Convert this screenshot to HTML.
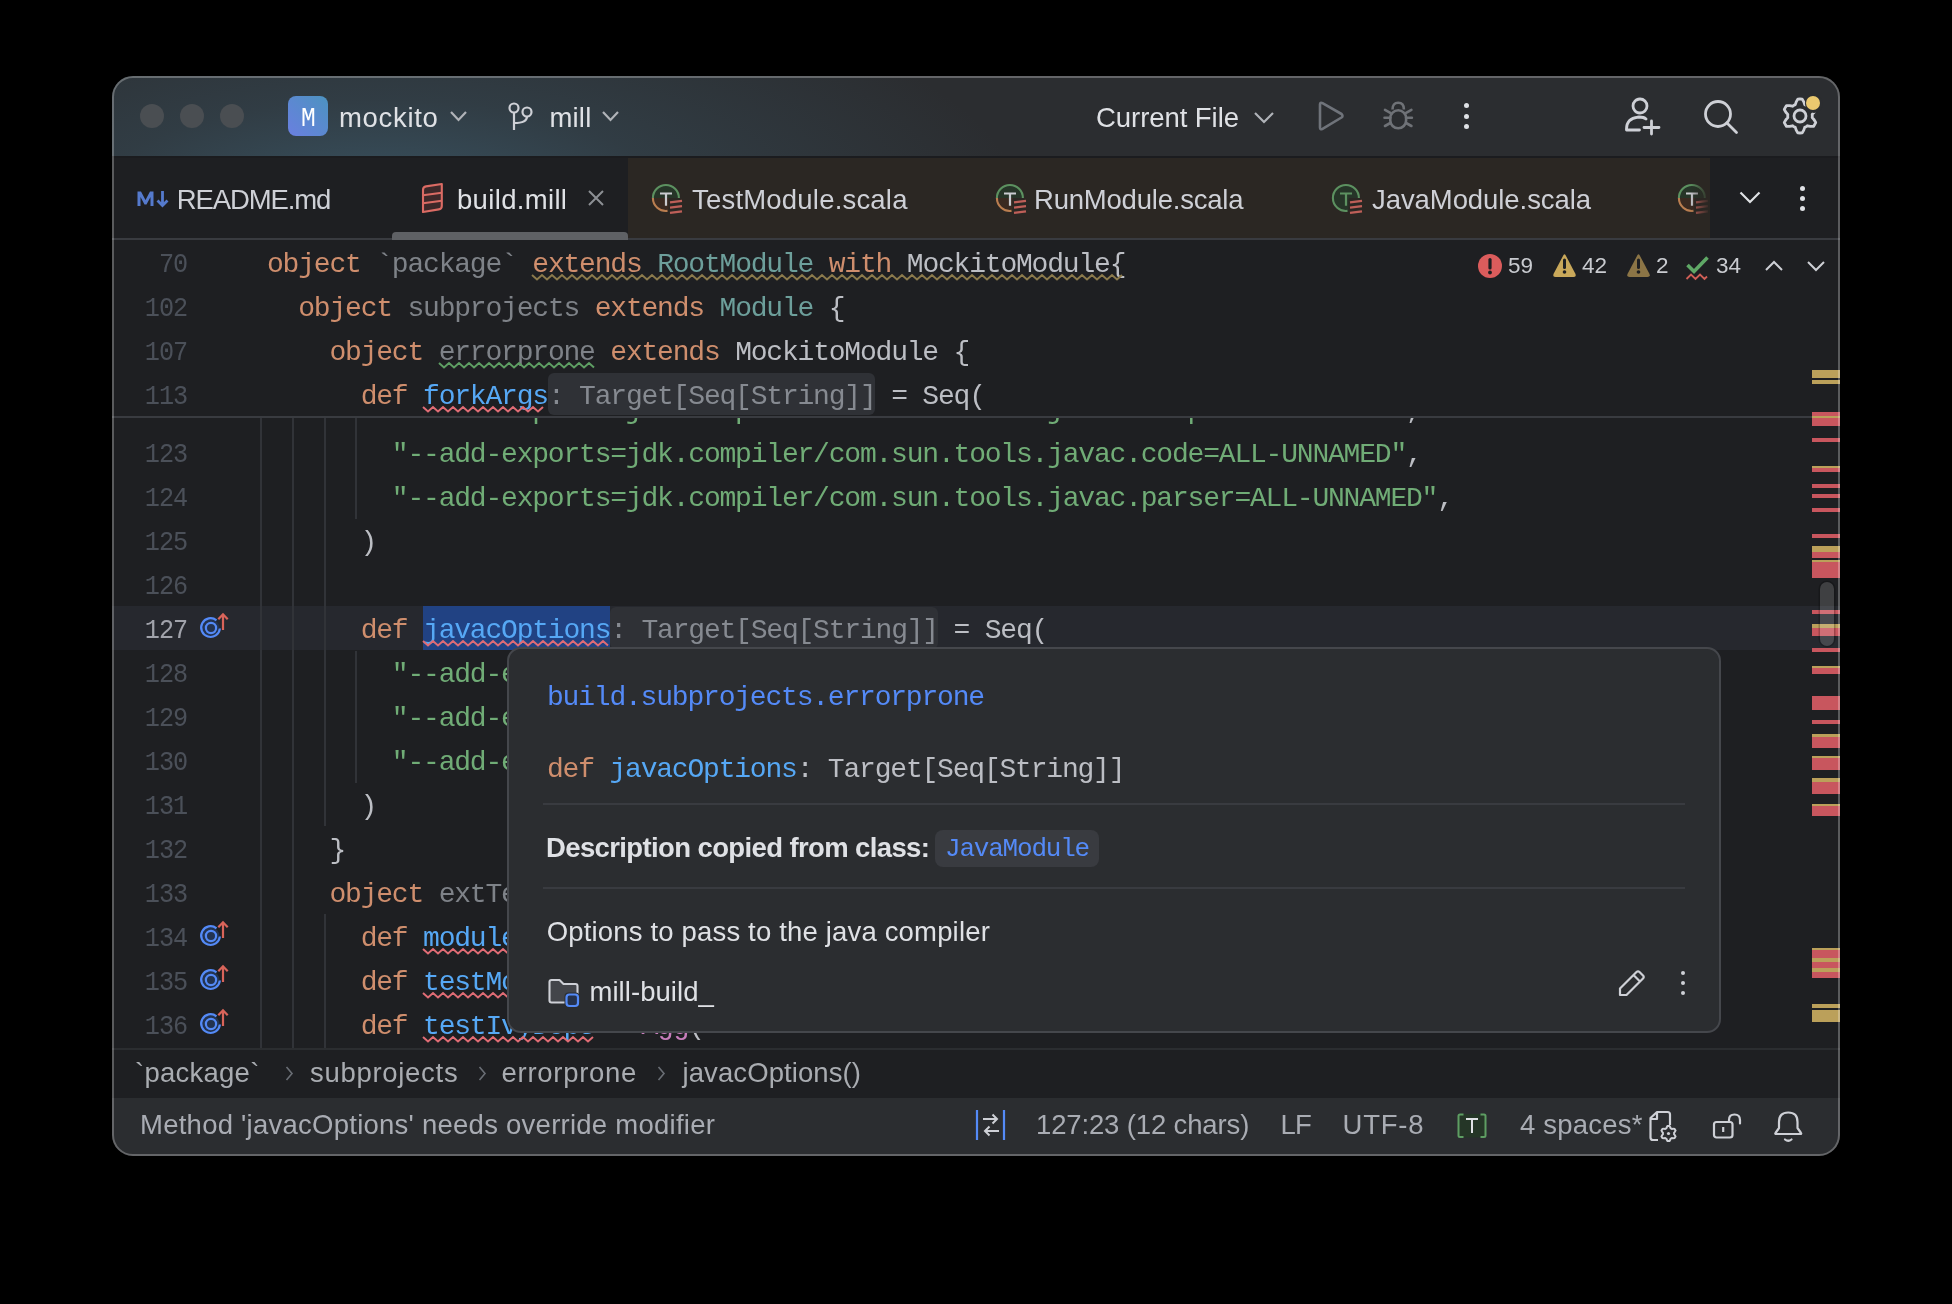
<!DOCTYPE html>
<html><head><meta charset="utf-8"><style>
*{margin:0;padding:0;box-sizing:border-box}
html,body{width:1952px;height:1304px;background:#000;overflow:hidden}
body{position:relative;font-family:"Liberation Sans",sans-serif;}
#win{will-change:transform;position:absolute;left:0;top:0;width:1952px;height:1304px;clip-path:inset(76px 112px 148px 112px round 21px);background:#1E1F22}
#frame{position:absolute;left:112px;top:76px;width:1728px;height:1080px;border-radius:21px;border:2px solid rgba(255,255,255,0.27);pointer-events:none}
.a{position:absolute}
svg{position:absolute;overflow:visible}
.t{position:absolute;white-space:pre;line-height:1}
.m{font-family:"Liberation Mono",monospace;font-size:28px;letter-spacing:-1.2px;white-space:pre}
.ui{font-size:26px;color:#DFE1E5}
.cl{position:absolute;left:0;height:44px;line-height:44px;white-space:pre;font-family:"Liberation Mono",monospace;font-size:28px;letter-spacing:-1.2px;padding-top:2px}
.ln{position:absolute;width:100px;text-align:right;transform:scaleX(0.9);transform-origin:100% 50%;height:44px;line-height:44px;white-space:pre;font-family:"Liberation Mono",monospace;font-size:28px;letter-spacing:-1.2px;color:#4B5059;padding-top:2px}
</style></head><body>
<div id="win">
<div class="a" style="left:0;top:76px;width:1952px;height:80px;background:#2B2D30"></div>
<div class="a" style="left:0;top:76px;width:1952px;height:80px;background:radial-gradient(ellipse 640px 230px at 380px 126px, rgba(66,106,128,0.62), rgba(66,106,128,0.25) 45%, rgba(66,106,128,0) 100%)"></div>
<div class="a" style="left:140px;top:104px;width:24px;height:24px;border-radius:50%;background:#4A4E52"></div>
<div class="a" style="left:180px;top:104px;width:24px;height:24px;border-radius:50%;background:#4A4E52"></div>
<div class="a" style="left:220px;top:104px;width:24px;height:24px;border-radius:50%;background:#4A4E52"></div>
<div class="a" style="left:288px;top:96px;width:40px;height:40px;border-radius:8px;background:linear-gradient(45deg,#6A7FE0,#4C93C0)"></div>
<div class="t" style="left:299.5px;top:104.5px;font-family:'Liberation Mono';font-size:28.5px;color:#fff;transform:scaleX(0.86);transform-origin:8px 0">M</div>
<div class="t" style="left:339.0px;top:104.1px;font-size:27.5px;letter-spacing:0.67px;color:#DFE1E5">mockito</div>
<svg style="left:450px;top:111px" width="17" height="11"><polyline points="1,1 8.5,9 16,1" fill="none" stroke="#B0B3B8" stroke-width="2.2"/></svg>
<svg style="left:506px;top:100px" width="30" height="34"><circle cx="8" cy="8" r="4.5" fill="none" stroke="#CED0D6" stroke-width="2.2"/><circle cx="21" cy="12" r="4.5" fill="none" stroke="#CED0D6" stroke-width="2.2"/><path d="M8 12.5 V30 M8 23 Q21 23 21 16.5" fill="none" stroke="#CED0D6" stroke-width="2.2"/></svg>
<div class="t" style="left:549.5px;top:104.1px;font-size:27.5px;letter-spacing:0.17px;color:#DFE1E5">mill</div>
<svg style="left:602px;top:111px" width="17" height="11"><polyline points="1,1 8.5,9 16,1" fill="none" stroke="#B0B3B8" stroke-width="2.2"/></svg>
<div class="t" style="left:1096.0px;top:104.1px;font-size:27.5px;letter-spacing:-0.06px;color:#DFE1E5">Current File</div>
<svg style="left:1254px;top:112px" width="21" height="12"><polyline points="1,1 10,10 19,1" fill="none" stroke="#B0B3B8" stroke-width="2.2"/></svg>
<svg style="left:1316px;top:100px" width="30" height="32"><path d="M4 4.5 Q4 2 6.5 3.2 L25.5 14 Q27.5 16 25.5 17.5 L6.5 28.8 Q4 30 4 27.5 Z" fill="none" stroke="#6F737A" stroke-width="2.6" stroke-linejoin="round"/></svg>
<svg style="left:1380px;top:100px" width="36" height="32"><path d="M12.5 9.5 Q12.5 2.8 18.2 2.8 Q23.9 2.8 23.9 9.5" fill="none" stroke="#6F7277" stroke-width="2.6"/><rect x="10.3" y="10.3" width="15.8" height="18" rx="7.9" fill="none" stroke="#6F7277" stroke-width="2.6"/><path d="M5 9.8 L10.3 12.8 M4.5 17.8 H10.3 M5 26 L10.3 23 M31.4 9.8 L26.1 12.8 M31.9 17.8 H26.1 M31.4 26 L26.1 23" fill="none" stroke="#6F7277" stroke-width="2.6" stroke-linecap="round"/></svg>
<div class="a" style="left:1463.5px;top:102.5px;width:5px;height:5px;border-radius:50%;background:#DFE1E5"></div>
<div class="a" style="left:1463.5px;top:113.5px;width:5px;height:5px;border-radius:50%;background:#DFE1E5"></div>
<div class="a" style="left:1463.5px;top:124.0px;width:5px;height:5px;border-radius:50%;background:#DFE1E5"></div>
<svg style="left:1620px;top:94px" width="46" height="46"><circle cx="20" cy="12" r="7" fill="none" stroke="#CED0D6" stroke-width="2.8"/><path d="M6.5 36 H19.5 M6.5 36 Q6 24 19 23 Q24 23 26 25" fill="none" stroke="#CED0D6" stroke-width="2.8" stroke-linecap="round"/><path d="M31.5 27 V40 M24 33.5 H39" fill="none" stroke="#CED0D6" stroke-width="2.8" stroke-linecap="round"/></svg>
<svg style="left:1700px;top:96px" width="44" height="42"><circle cx="18" cy="18" r="12.5" fill="none" stroke="#CED0D6" stroke-width="2.8"/><path d="M27 27 L36.5 36.5" fill="none" stroke="#CED0D6" stroke-width="2.8" stroke-linecap="round"/></svg>
<svg style="left:1780px;top:96px" width="40" height="40"><polygon points="20.00,3.00 22.22,3.15 23.78,5.90 24.71,8.64 26.15,9.35 27.49,10.24 30.32,9.68 33.49,9.65 34.72,11.50 35.71,13.49 34.10,16.22 32.19,18.39 32.30,20.00 32.19,21.61 34.10,23.78 35.71,26.51 34.72,28.50 33.49,30.35 30.32,30.32 27.49,29.76 26.15,30.65 24.71,31.36 23.78,34.10 22.22,36.85 20.00,37.00 17.78,36.85 16.22,34.10 15.29,31.36 13.85,30.65 12.51,29.76 9.68,30.32 6.51,30.35 5.28,28.50 4.29,26.51 5.90,23.78 7.81,21.61 7.70,20.00 7.81,18.39 5.90,16.22 4.29,13.49 5.28,11.50 6.51,9.65 9.68,9.68 12.51,10.24 13.85,9.35 15.29,8.64 16.22,5.90 17.78,3.15" fill="none" stroke="#CED0D6" stroke-width="2.8" stroke-linejoin="round"/><circle cx="20" cy="20" r="6" fill="none" stroke="#CED0D6" stroke-width="2.8"/></svg>
<div class="a" style="left:1805px;top:95px;width:18px;height:18px;border-radius:50%;background:#2B2D30"></div>
<div class="a" style="left:1806px;top:96px;width:14px;height:14px;border-radius:50%;background:#EBC96F"></div>
<div class="a" style="left:0;top:156px;width:1952px;height:2px;background:#1B1C1F"></div>
<div class="a" style="left:0;top:158px;width:1952px;height:80px;background:#1E1F22"></div>
<div class="a" style="left:628px;top:158px;width:1082px;height:80px;background:#2B2723"></div>
<div class="a" style="left:0;top:238px;width:1952px;height:2px;background:#393B40"></div>
<div class="a" style="left:392px;top:232px;width:236px;height:8px;border-radius:4px 4px 0 0;background:#5F6165"></div>
<svg style="left:130px;top:175px" width="50" height="40"><path d="M7.5 31 V16.5 H11 L15.5 25 L20 16.5 H23.5 V31 H20.5 V22 L16.5 29.5 H14.5 L10.5 22 V31 Z" fill="#557ACD"/><path d="M32.5 16 V30 M27.5 25.5 L32.5 30.5 L37.5 25.5" fill="none" stroke="#557ACD" stroke-width="2.8"/></svg>
<div class="t" style="left:176.7px;top:185.9px;font-size:27.5px;letter-spacing:-1.11px;color:#CED0D6">README.md</div>
<svg style="left:410px;top:175px" width="50" height="50"><path d="M13 15 Q13 11.8 16 11.4 L31.8 9 L31.8 31 Q31.8 34 28.8 34.4 L13 37 Z" fill="#3D2829" stroke="#DB6B64" stroke-width="2.1" stroke-linejoin="round"/><path d="M13 20.3 L31.8 17.7 M13 28.3 L31.8 25.7" stroke="#DB6B64" stroke-width="2.1"/></svg>
<div class="t" style="left:457.0px;top:185.9px;font-size:27.5px;letter-spacing:0.33px;color:#DFE1E5">build.mill</div>
<svg style="left:588px;top:190px" width="16" height="16"><path d="M1 1 L15 15 M15 1 L1 15" stroke="#8C8F94" stroke-width="2"/></svg>
<svg style="left:651px;top:183px;opacity:1.00" width="34" height="34"><path d="M1.9 15 A13 13 0 0 1 27.9 15 Z" fill="#263528"/><path d="M1.9 15 A13 13 0 0 0 18 27.7 L18 15 Z" fill="#3A2A21"/><path d="M1.9 15 A13 13 0 0 1 27.9 15" fill="none" stroke="#5C9160" stroke-width="2.1"/><path d="M1.9 15 A13 13 0 0 0 16.5 27.9" fill="none" stroke="#BA7E50" stroke-width="2.1"/><path d="M9 10.5 H21 M15 10.5 V22.7" stroke="#C9CBD0" stroke-width="2.2"/><path d="M17.5 16 H33 V32 H17.5 Z" fill="#2B2723"/><path d="M19 19.3 L31 17.8 M19 24.6 L31 23.1 M19 29.9 L31 28.4" stroke="#BF5F58" stroke-width="2.3"/></svg>
<div class="t" style="left:692.0px;top:185.9px;font-size:27.5px;letter-spacing:0.20px;color:#CED0D6">TestModule.scala</div>
<svg style="left:995px;top:183px;opacity:1.00" width="34" height="34"><path d="M1.9 15 A13 13 0 0 1 27.9 15 Z" fill="#263528"/><path d="M1.9 15 A13 13 0 0 0 18 27.7 L18 15 Z" fill="#3A2A21"/><path d="M1.9 15 A13 13 0 0 1 27.9 15" fill="none" stroke="#5C9160" stroke-width="2.1"/><path d="M1.9 15 A13 13 0 0 0 16.5 27.9" fill="none" stroke="#BA7E50" stroke-width="2.1"/><path d="M9 10.5 H21 M15 10.5 V22.7" stroke="#C9CBD0" stroke-width="2.2"/><path d="M17.5 16 H33 V32 H17.5 Z" fill="#2B2723"/><path d="M19 19.3 L31 17.8 M19 24.6 L31 23.1 M19 29.9 L31 28.4" stroke="#BF5F58" stroke-width="2.3"/></svg>
<div class="t" style="left:1034.0px;top:185.9px;font-size:27.5px;letter-spacing:-0.21px;color:#CED0D6">RunModule.scala</div>
<svg style="left:1331px;top:183px;opacity:1.00" width="34" height="34"><path d="M1.9 15 A13 13 0 0 1 27.9 15 Z" fill="#263528"/><path d="M1.9 15 A13 13 0 0 0 18 27.7 L18 15 Z" fill="#263528"/><path d="M1.9 15 A13 13 0 0 1 27.9 15" fill="none" stroke="#5C9160" stroke-width="2.1"/><path d="M1.9 15 A13 13 0 0 0 16.5 27.9" fill="none" stroke="#5C9160" stroke-width="2.1"/><path d="M9 10.5 H21 M15 10.5 V22.7" stroke="#5C9160" stroke-width="2.2"/><path d="M17.5 16 H33 V32 H17.5 Z" fill="#2B2723"/><path d="M19 19.3 L31 17.8 M19 24.6 L31 23.1 M19 29.9 L31 28.4" stroke="#BF5F58" stroke-width="2.3"/></svg>
<div class="t" style="left:1372.0px;top:185.9px;font-size:27.5px;letter-spacing:-0.07px;color:#CED0D6">JavaModule.scala</div>
<svg style="left:1677px;top:183px;opacity:1.00" width="34" height="34"><path d="M1.9 15 A13 13 0 0 1 27.9 15 Z" fill="#263528"/><path d="M1.9 15 A13 13 0 0 0 18 27.7 L18 15 Z" fill="#3A2A21"/><path d="M1.9 15 A13 13 0 0 1 27.9 15" fill="none" stroke="#5C9160" stroke-width="2.1"/><path d="M1.9 15 A13 13 0 0 0 16.5 27.9" fill="none" stroke="#BA7E50" stroke-width="2.1"/><path d="M9 10.5 H21 M15 10.5 V22.7" stroke="#C9CBD0" stroke-width="2.2"/><path d="M17.5 16 H33 V32 H17.5 Z" fill="#2B2723"/><path d="M19 19.3 L31 17.8 M19 24.6 L31 23.1 M19 29.9 L31 28.4" stroke="#BF5F58" stroke-width="2.3"/></svg>
<div class="a" style="left:1690px;top:175px;width:20px;height:50px;background:linear-gradient(90deg,rgba(43,39,35,0),#2B2723)"></div>
<svg style="left:1739px;top:191px" width="22" height="14"><polyline points="1.5,1.5 11,11 20.5,1.5" fill="none" stroke="#DFE1E5" stroke-width="2.2"/></svg>
<div class="a" style="left:1799.5px;top:185.5px;width:5px;height:5px;border-radius:50%;background:#DFE1E5"></div>
<div class="a" style="left:1799.5px;top:195.5px;width:5px;height:5px;border-radius:50%;background:#DFE1E5"></div>
<div class="a" style="left:1799.5px;top:205.5px;width:5px;height:5px;border-radius:50%;background:#DFE1E5"></div>
<div class="a" style="left:0;top:606px;width:1952px;height:44px;background:#26282E"></div>
<div class="a" style="left:260.0px;top:418px;width:2px;height:630px;background:#313338"></div>
<div class="a" style="left:292.0px;top:418px;width:2px;height:630px;background:#313338"></div>
<div class="a" style="left:324.0px;top:418px;width:2px;height:408px;background:#313338"></div>
<div class="a" style="left:324.0px;top:914px;width:2px;height:134px;background:#313338"></div>
<div class="a" style="left:354.5px;top:418px;width:2px;height:101px;background:#313338"></div>
<div class="a" style="left:354.5px;top:651px;width:2px;height:132px;background:#313338"></div>
<div class="a" style="left:423.0px;top:606px;width:187.2px;height:44px;background:#214283"></div>
<div class="a" style="left:610.2px;top:607px;width:327.6px;height:42px;border-radius:6px;background:#2F3136"></div>
<div class="cl" style="top:387px;left:267.0px"><span style="color:#BCBEC4">        </span><span style="color:#70AC76">"--add-exports=jdk.compiler/com.sun.tools.javac.comp=ALL-UNNAMED"</span><span style="color:#BCBEC4">,</span></div>
<div class="ln" style="top:431px;left:86.7px;color:#4B5059">123</div>
<div class="cl" style="top:431px;left:267.0px"><span style="color:#BCBEC4">        </span><span style="color:#70AC76">"--add-exports=jdk.compiler/com.sun.tools.javac.code=ALL-UNNAMED"</span><span style="color:#BCBEC4">,</span></div>
<div class="ln" style="top:475px;left:86.7px;color:#4B5059">124</div>
<div class="cl" style="top:475px;left:267.0px"><span style="color:#BCBEC4">        </span><span style="color:#70AC76">"--add-exports=jdk.compiler/com.sun.tools.javac.parser=ALL-UNNAMED"</span><span style="color:#BCBEC4">,</span></div>
<div class="ln" style="top:519px;left:86.7px;color:#4B5059">125</div>
<div class="cl" style="top:519px;left:267.0px"><span style="color:#BCBEC4">      )</span></div>
<div class="ln" style="top:563px;left:86.7px;color:#4B5059">126</div>
<div class="cl" style="top:563px;left:267.0px"><span style="color:#BCBEC4"></span></div>
<div class="ln" style="top:607px;left:86.7px;color:#A1A3AB">127</div>
<div class="cl" style="top:607px;left:267.0px"><span style="color:#BCBEC4">      </span><span style="color:#CF8E6D">def</span><span style="color:#BCBEC4"> </span><span style="color:#56A8F5">javacOptions</span><span style="color:#868A91">: Target[Seq[String]]</span><span style="color:#BCBEC4"> = Seq(</span></div>
<div class="ln" style="top:651px;left:86.7px;color:#4B5059">128</div>
<div class="cl" style="top:651px;left:267.0px"><span style="color:#BCBEC4">        </span><span style="color:#70AC76">"--add-exports=jdk.compiler/com.sun.tools.javac.file=ALL-UNNAMED"</span><span style="color:#BCBEC4">,</span></div>
<div class="ln" style="top:695px;left:86.7px;color:#4B5059">129</div>
<div class="cl" style="top:695px;left:267.0px"><span style="color:#BCBEC4">        </span><span style="color:#70AC76">"--add-exports=jdk.compiler/com.sun.tools.javac.main=ALL-UNNAMED"</span><span style="color:#BCBEC4">,</span></div>
<div class="ln" style="top:739px;left:86.7px;color:#4B5059">130</div>
<div class="cl" style="top:739px;left:267.0px"><span style="color:#BCBEC4">        </span><span style="color:#70AC76">"--add-exports=jdk.compiler/com.sun.tools.javac.util=ALL-UNNAMED"</span><span style="color:#BCBEC4">,</span></div>
<div class="ln" style="top:783px;left:86.7px;color:#4B5059">131</div>
<div class="cl" style="top:783px;left:267.0px"><span style="color:#BCBEC4">      )</span></div>
<div class="ln" style="top:827px;left:86.7px;color:#4B5059">132</div>
<div class="cl" style="top:827px;left:267.0px"><span style="color:#BCBEC4">    }</span></div>
<div class="ln" style="top:871px;left:86.7px;color:#4B5059">133</div>
<div class="cl" style="top:871px;left:267.0px"><span style="color:#BCBEC4">    </span><span style="color:#CF8E6D">object</span><span style="color:#BCBEC4"> </span><span style="color:#7E8288">extTest</span><span style="color:#BCBEC4"> extends MockitoModule {</span></div>
<div class="ln" style="top:915px;left:86.7px;color:#4B5059">134</div>
<div class="cl" style="top:915px;left:267.0px"><span style="color:#BCBEC4">      </span><span style="color:#CF8E6D">def</span><span style="color:#BCBEC4"> </span><span style="color:#56A8F5">moduleDeps</span><span style="color:#BCBEC4"> = Seq(`package`)</span></div>
<div class="ln" style="top:959px;left:86.7px;color:#4B5059">135</div>
<div class="cl" style="top:959px;left:267.0px"><span style="color:#BCBEC4">      </span><span style="color:#CF8E6D">def</span><span style="color:#BCBEC4"> </span><span style="color:#56A8F5">testModuleDeps</span><span style="color:#BCBEC4"> = Seq()</span></div>
<div class="ln" style="top:1003px;left:86.7px;color:#4B5059">136</div>
<div class="cl" style="top:1003px;left:267.0px"><span style="color:#BCBEC4">      </span><span style="color:#CF8E6D">def</span><span style="color:#BCBEC4"> </span><span style="color:#56A8F5">testIvyDeps</span><span style="color:#BCBEC4"> = </span><span style="color:#C77DBB">Agg</span><span style="color:#BCBEC4">(</span></div>
<svg style="left:423.0px;top:641.0px" width="189" height="6"><polyline points="0.0,0.0 5.0,4.5 10.0,0.0 15.0,4.5 20.0,0.0 25.0,4.5 30.0,0.0 35.0,4.5 40.0,0.0 45.0,4.5 50.0,0.0 55.0,4.5 60.0,0.0 65.0,4.5 70.0,0.0 75.0,4.5 80.0,0.0 85.0,4.5 90.0,0.0 95.0,4.5 100.0,0.0 105.0,4.5 110.0,0.0 115.0,4.5 120.0,0.0 125.0,4.5 130.0,0.0 135.0,4.5 140.0,0.0 145.0,4.5 150.0,0.0 155.0,4.5 160.0,0.0 165.0,4.5 170.0,0.0 175.0,4.5 180.0,0.0 185.0,4.5" fill="none" stroke="#E06C75" stroke-width="2"/></svg>
<svg style="left:423.0px;top:949.0px" width="158" height="6"><polyline points="0.0,0.0 5.0,4.5 10.0,0.0 15.0,4.5 20.0,0.0 25.0,4.5 30.0,0.0 35.0,4.5 40.0,0.0 45.0,4.5 50.0,0.0 55.0,4.5 60.0,0.0 65.0,4.5 70.0,0.0 75.0,4.5 80.0,0.0 85.0,4.5 90.0,0.0 95.0,4.5 100.0,0.0 105.0,4.5 110.0,0.0 115.0,4.5 120.0,0.0 125.0,4.5 130.0,0.0 135.0,4.5 140.0,0.0 145.0,4.5 150.0,0.0 155.0,4.5" fill="none" stroke="#E06C75" stroke-width="2"/></svg>
<svg style="left:423.0px;top:993.0px" width="220" height="6"><polyline points="0.0,0.0 5.0,4.5 10.0,0.0 15.0,4.5 20.0,0.0 25.0,4.5 30.0,0.0 35.0,4.5 40.0,0.0 45.0,4.5 50.0,0.0 55.0,4.5 60.0,0.0 65.0,4.5 70.0,0.0 75.0,4.5 80.0,0.0 85.0,4.5 90.0,0.0 95.0,4.5 100.0,0.0 105.0,4.5 110.0,0.0 115.0,4.5 120.0,0.0 125.0,4.5 130.0,0.0 135.0,4.5 140.0,0.0 145.0,4.5 150.0,0.0 155.0,4.5 160.0,0.0 165.0,4.5 170.0,0.0 175.0,4.5 180.0,0.0 185.0,4.5 190.0,0.0 195.0,4.5 200.0,0.0 205.0,4.5 210.0,0.0 215.0,4.5" fill="none" stroke="#E06C75" stroke-width="2"/></svg>
<svg style="left:423.0px;top:1037.0px" width="173" height="6"><polyline points="0.0,0.0 5.0,4.5 10.0,0.0 15.0,4.5 20.0,0.0 25.0,4.5 30.0,0.0 35.0,4.5 40.0,0.0 45.0,4.5 50.0,0.0 55.0,4.5 60.0,0.0 65.0,4.5 70.0,0.0 75.0,4.5 80.0,0.0 85.0,4.5 90.0,0.0 95.0,4.5 100.0,0.0 105.0,4.5 110.0,0.0 115.0,4.5 120.0,0.0 125.0,4.5 130.0,0.0 135.0,4.5 140.0,0.0 145.0,4.5 150.0,0.0 155.0,4.5 160.0,0.0 165.0,4.5 170.0,0.0" fill="none" stroke="#E06C75" stroke-width="2"/></svg>
<svg style="left:196px;top:607px" width="36" height="44"><circle cx="14.5" cy="21" r="9" fill="#233350"/><path d="M20.5 13.3 A9.4 9.4 0 1 0 23.9 21.5" fill="none" stroke="#548AF7" stroke-width="2.2"/><circle cx="15" cy="21" r="5.1" fill="none" stroke="#548AF7" stroke-width="2.2"/><path d="M27 8 V23 M22.3 12.3 L27 7.3 L31.7 12.3" fill="none" stroke="#D9645A" stroke-width="2.2"/></svg>
<svg style="left:196px;top:915px" width="36" height="44"><circle cx="14.5" cy="21" r="9" fill="#233350"/><path d="M20.5 13.3 A9.4 9.4 0 1 0 23.9 21.5" fill="none" stroke="#548AF7" stroke-width="2.2"/><circle cx="15" cy="21" r="5.1" fill="none" stroke="#548AF7" stroke-width="2.2"/><path d="M27 8 V23 M22.3 12.3 L27 7.3 L31.7 12.3" fill="none" stroke="#D9645A" stroke-width="2.2"/></svg>
<svg style="left:196px;top:959px" width="36" height="44"><circle cx="14.5" cy="21" r="9" fill="#233350"/><path d="M20.5 13.3 A9.4 9.4 0 1 0 23.9 21.5" fill="none" stroke="#548AF7" stroke-width="2.2"/><circle cx="15" cy="21" r="5.1" fill="none" stroke="#548AF7" stroke-width="2.2"/><path d="M27 8 V23 M22.3 12.3 L27 7.3 L31.7 12.3" fill="none" stroke="#D9645A" stroke-width="2.2"/></svg>
<svg style="left:196px;top:1003px" width="36" height="44"><circle cx="14.5" cy="21" r="9" fill="#233350"/><path d="M20.5 13.3 A9.4 9.4 0 1 0 23.9 21.5" fill="none" stroke="#548AF7" stroke-width="2.2"/><circle cx="15" cy="21" r="5.1" fill="none" stroke="#548AF7" stroke-width="2.2"/><path d="M27 8 V23 M22.3 12.3 L27 7.3 L31.7 12.3" fill="none" stroke="#D9645A" stroke-width="2.2"/></svg>
<div class="a" style="left:0;top:240px;width:1952px;height:175.5px;background:#1E1F22"></div>
<div class="a" style="left:0;top:415.5px;width:1952px;height:2px;background:#393B40"></div>
<div class="a" style="left:547.8px;top:373px;width:327.6px;height:42px;border-radius:6px;background:#2F3136"></div>
<div class="ln" style="top:241px;left:86.7px;color:#4B5059">70</div>
<div class="cl" style="top:241px;left:267.0px"><span style="color:#CF8E6D">object</span><span style="color:#BCBEC4"> </span><span style="color:#7E8288">`package`</span><span style="color:#BCBEC4"> </span><span style="color:#CF8E6D">extends</span><span style="color:#BCBEC4"> </span><span style="color:#6D9F9B">RootModule</span><span style="color:#BCBEC4"> </span><span style="color:#CF8E6D">with</span><span style="color:#BCBEC4"> </span><span style="color:#BCBEC4">MockitoModule{</span></div>
<div class="ln" style="top:285px;left:86.7px;color:#4B5059">102</div>
<div class="cl" style="top:285px;left:267.0px"><span style="color:#BCBEC4">  </span><span style="color:#CF8E6D">object</span><span style="color:#BCBEC4"> </span><span style="color:#7E8288">subprojects</span><span style="color:#BCBEC4"> </span><span style="color:#CF8E6D">extends</span><span style="color:#BCBEC4"> </span><span style="color:#6D9F9B">Module</span><span style="color:#BCBEC4"> {</span></div>
<div class="ln" style="top:329px;left:86.7px;color:#4B5059">107</div>
<div class="cl" style="top:329px;left:267.0px"><span style="color:#BCBEC4">    </span><span style="color:#CF8E6D">object</span><span style="color:#BCBEC4"> </span><span style="color:#7E8288">errorprone</span><span style="color:#BCBEC4"> </span><span style="color:#CF8E6D">extends</span><span style="color:#BCBEC4"> </span><span style="color:#BCBEC4">MockitoModule {</span></div>
<div class="ln" style="top:373px;left:86.7px;color:#4B5059">113</div>
<div class="cl" style="top:373px;left:267.0px"><span style="color:#BCBEC4">      </span><span style="color:#CF8E6D">def</span><span style="color:#BCBEC4"> </span><span style="color:#56A8F5">forkArgs</span><span style="color:#868A91">: Target[Seq[String]]</span><span style="color:#BCBEC4"> = Seq(</span></div>
<svg style="left:532.2px;top:275.0px" width="594" height="6"><polyline points="0.0,0.0 5.0,4.5 10.0,0.0 15.0,4.5 20.0,0.0 25.0,4.5 30.0,0.0 35.0,4.5 40.0,0.0 45.0,4.5 50.0,0.0 55.0,4.5 60.0,0.0 65.0,4.5 70.0,0.0 75.0,4.5 80.0,0.0 85.0,4.5 90.0,0.0 95.0,4.5 100.0,0.0 105.0,4.5 110.0,0.0 115.0,4.5 120.0,0.0 125.0,4.5 130.0,0.0 135.0,4.5 140.0,0.0 145.0,4.5 150.0,0.0 155.0,4.5 160.0,0.0 165.0,4.5 170.0,0.0 175.0,4.5 180.0,0.0 185.0,4.5 190.0,0.0 195.0,4.5 200.0,0.0 205.0,4.5 210.0,0.0 215.0,4.5 220.0,0.0 225.0,4.5 230.0,0.0 235.0,4.5 240.0,0.0 245.0,4.5 250.0,0.0 255.0,4.5 260.0,0.0 265.0,4.5 270.0,0.0 275.0,4.5 280.0,0.0 285.0,4.5 290.0,0.0 295.0,4.5 300.0,0.0 305.0,4.5 310.0,0.0 315.0,4.5 320.0,0.0 325.0,4.5 330.0,0.0 335.0,4.5 340.0,0.0 345.0,4.5 350.0,0.0 355.0,4.5 360.0,0.0 365.0,4.5 370.0,0.0 375.0,4.5 380.0,0.0 385.0,4.5 390.0,0.0 395.0,4.5 400.0,0.0 405.0,4.5 410.0,0.0 415.0,4.5 420.0,0.0 425.0,4.5 430.0,0.0 435.0,4.5 440.0,0.0 445.0,4.5 450.0,0.0 455.0,4.5 460.0,0.0 465.0,4.5 470.0,0.0 475.0,4.5 480.0,0.0 485.0,4.5 490.0,0.0 495.0,4.5 500.0,0.0 505.0,4.5 510.0,0.0 515.0,4.5 520.0,0.0 525.0,4.5 530.0,0.0 535.0,4.5 540.0,0.0 545.0,4.5 550.0,0.0 555.0,4.5 560.0,0.0 565.0,4.5 570.0,0.0 575.0,4.5 580.0,0.0 585.0,4.5 590.0,0.0" fill="none" stroke="#8B7A4C" stroke-width="2"/></svg>
<svg style="left:438.6px;top:363.0px" width="157" height="6"><polyline points="0.0,0.0 5.0,4.5 10.0,0.0 15.0,4.5 20.0,0.0 25.0,4.5 30.0,0.0 35.0,4.5 40.0,0.0 45.0,4.5 50.0,0.0 55.0,4.5 60.0,0.0 65.0,4.5 70.0,0.0 75.0,4.5 80.0,0.0 85.0,4.5 90.0,0.0 95.0,4.5 100.0,0.0 105.0,4.5 110.0,0.0 115.0,4.5 120.0,0.0 125.0,4.5 130.0,0.0 135.0,4.5 140.0,0.0 145.0,4.5 150.0,0.0 155.0,4.5" fill="none" stroke="#5E9E63" stroke-width="2"/></svg>
<svg style="left:423.0px;top:407.0px" width="126" height="6"><polyline points="0.0,0.0 5.0,4.5 10.0,0.0 15.0,4.5 20.0,0.0 25.0,4.5 30.0,0.0 35.0,4.5 40.0,0.0 45.0,4.5 50.0,0.0 55.0,4.5 60.0,0.0 65.0,4.5 70.0,0.0 75.0,4.5 80.0,0.0 85.0,4.5 90.0,0.0 95.0,4.5 100.0,0.0 105.0,4.5 110.0,0.0 115.0,4.5 120.0,0.0" fill="none" stroke="#E06C75" stroke-width="2"/></svg>
<svg style="left:1476px;top:252px" width="28" height="28"><circle cx="14" cy="14" r="12" fill="#DB5C5C"/><path d="M14 7.5 V16" stroke="#1E1F22" stroke-width="3.2" stroke-linecap="round"/><circle cx="14" cy="20.5" r="1.9" fill="#1E1F22"/></svg>
<div class="t" style="left:1508px;top:255px;font-size:22.5px;color:#C9CBD0">59</div>
<svg style="left:1550px;top:252px" width="28" height="28"><path d="M13.5 3 Q14.5 1.5 15.5 3 L25.5 22 Q26.5 25 23.5 25 H5.5 Q2.5 25 3.5 22 Z" fill="#C9A85A"/><path d="M14.5 8 V15.5" stroke="#1E1F22" stroke-width="3" stroke-linecap="round"/><circle cx="14.5" cy="20" r="1.8" fill="#1E1F22"/></svg>
<div class="t" style="left:1582px;top:255px;font-size:22.5px;color:#C9CBD0">42</div>
<svg style="left:1624px;top:252px" width="28" height="28"><path d="M13.5 3 Q14.5 1.5 15.5 3 L25.5 22 Q26.5 25 23.5 25 H5.5 Q2.5 25 3.5 22 Z" fill="#8C7546"/><path d="M14.5 8 V15.5" stroke="#1E1F22" stroke-width="3" stroke-linecap="round"/><circle cx="14.5" cy="20" r="1.8" fill="#1E1F22"/></svg>
<div class="t" style="left:1656px;top:255px;font-size:22.5px;color:#C9CBD0">2</div>
<svg style="left:1684px;top:252px" width="28" height="32"><path d="M3.5 13 L10 19.5 L23.5 5.5" fill="none" stroke="#5FA866" stroke-width="3.6"/><path d="M2.5 27 L7 22.5 L11.5 27 L16 22.5 L20.5 27 L23 24.5" fill="none" stroke="#D05F57" stroke-width="1.8"/></svg>
<div class="t" style="left:1716px;top:255px;font-size:22.5px;color:#C9CBD0">34</div>
<svg style="left:1764px;top:259px" width="20" height="14"><polyline points="2,11 10,3 18,11" fill="none" stroke="#CED0D6" stroke-width="2"/></svg>
<svg style="left:1806px;top:259px" width="20" height="14"><polyline points="2,3 10,11 18,3" fill="none" stroke="#CED0D6" stroke-width="2"/></svg>
<div class="a" style="left:1812px;top:370.0px;width:28px;height:8.0px;background:#BBA05A"></div>
<div class="a" style="left:1812px;top:380.0px;width:28px;height:4.0px;background:#BBA05A"></div>
<div class="a" style="left:1812px;top:412.0px;width:28px;height:14.0px;background:#C8565E"></div>
<div class="a" style="left:1812px;top:416.0px;width:28px;height:2.0px;background:#BBA05A"></div>
<div class="a" style="left:1812px;top:438.0px;width:28px;height:4.0px;background:#C8565E"></div>
<div class="a" style="left:1812px;top:466.0px;width:28px;height:2.0px;background:#BBA05A"></div>
<div class="a" style="left:1812px;top:468.0px;width:28px;height:4.0px;background:#C8565E"></div>
<div class="a" style="left:1812px;top:484.0px;width:28px;height:4.0px;background:#C8565E"></div>
<div class="a" style="left:1812px;top:494.0px;width:28px;height:4.0px;background:#C8565E"></div>
<div class="a" style="left:1812px;top:508.0px;width:28px;height:4.0px;background:#C8565E"></div>
<div class="a" style="left:1812px;top:534.0px;width:28px;height:4.0px;background:#C8565E"></div>
<div class="a" style="left:1812px;top:546.0px;width:28px;height:6.0px;background:#BBA05A"></div>
<div class="a" style="left:1812px;top:552.0px;width:28px;height:6.0px;background:#C8565E"></div>
<div class="a" style="left:1812px;top:560.0px;width:28px;height:2.0px;background:#BBA05A"></div>
<div class="a" style="left:1812px;top:562.0px;width:28px;height:16.0px;background:#C8565E"></div>
<div class="a" style="left:1812px;top:610.0px;width:28px;height:4.0px;background:#C8565E"></div>
<div class="a" style="left:1812px;top:624.0px;width:28px;height:4.0px;background:#BBA05A"></div>
<div class="a" style="left:1812px;top:628.0px;width:28px;height:8.0px;background:#C8565E"></div>
<div class="a" style="left:1812px;top:648.0px;width:28px;height:4.0px;background:#C8565E"></div>
<div class="a" style="left:1812px;top:666.0px;width:28px;height:2.0px;background:#BBA05A"></div>
<div class="a" style="left:1812px;top:668.0px;width:28px;height:6.0px;background:#C8565E"></div>
<div class="a" style="left:1812px;top:696.0px;width:28px;height:14.0px;background:#C8565E"></div>
<div class="a" style="left:1812px;top:720.0px;width:28px;height:4.0px;background:#C8565E"></div>
<div class="a" style="left:1812px;top:734.0px;width:28px;height:2.5px;background:#BBA05A"></div>
<div class="a" style="left:1812px;top:736.5px;width:28px;height:11.5px;background:#C8565E"></div>
<div class="a" style="left:1812px;top:756.0px;width:28px;height:2.0px;background:#BBA05A"></div>
<div class="a" style="left:1812px;top:758.0px;width:28px;height:12.0px;background:#C8565E"></div>
<div class="a" style="left:1812px;top:778.0px;width:28px;height:4.0px;background:#BBA05A"></div>
<div class="a" style="left:1812px;top:782.0px;width:28px;height:12.0px;background:#C8565E"></div>
<div class="a" style="left:1812px;top:803.5px;width:28px;height:2.5px;background:#BBA05A"></div>
<div class="a" style="left:1812px;top:806.0px;width:28px;height:10.0px;background:#C8565E"></div>
<div class="a" style="left:1812px;top:948.0px;width:28px;height:2.0px;background:#BBA05A"></div>
<div class="a" style="left:1812px;top:950.0px;width:28px;height:8.0px;background:#C8565E"></div>
<div class="a" style="left:1812px;top:958.0px;width:28px;height:4.0px;background:#BBA05A"></div>
<div class="a" style="left:1812px;top:962.0px;width:28px;height:6.0px;background:#C8565E"></div>
<div class="a" style="left:1812px;top:968.0px;width:28px;height:4.0px;background:#BBA05A"></div>
<div class="a" style="left:1812px;top:972.0px;width:28px;height:6.0px;background:#C8565E"></div>
<div class="a" style="left:1812px;top:1004.0px;width:28px;height:4.0px;background:#BBA05A"></div>
<div class="a" style="left:1812px;top:1010.0px;width:28px;height:12.0px;background:#BBA05A"></div>
<div class="a" style="left:1820px;top:582px;width:14px;height:64px;border-radius:7px;background:rgba(255,255,255,0.15);box-shadow:0 0 0 1.5px rgba(0,0,0,0.22)"></div>
<div class="a" style="left:507px;top:647px;width:1214px;height:386px;border-radius:14px;background:#2B2D30;border:2px solid #45474C"></div>
<div class="t m" style="left:547px;top:684px;color:#548AF7">build.subprojects.errorprone</div>
<div class="t m" style="left:547px;top:756px;color:#BCBEC4"><span style="color:#CF8E6D">def</span> <span style="color:#56A8F5">javacOptions</span>: Target[Seq[String]]</div>
<div class="a" style="left:543px;top:803px;width:1142px;height:2px;background:#393B40"></div>
<div class="t" style="left:546.0px;top:834.4px;font-size:27.5px;letter-spacing:-0.62px;color:#DFE1E5;font-weight:bold">Description copied from class:</div>
<div class="a" style="left:935px;top:830px;width:164px;height:37px;border-radius:8px;background:#393B40"></div>
<div class="t m" style="left:945px;top:836px;color:#548AF7;font-size:26px;letter-spacing:-1.2px">JavaModule</div>
<div class="a" style="left:543px;top:887px;width:1142px;height:2px;background:#393B40"></div>
<div class="t" style="left:546.7px;top:917.9px;font-size:27.5px;letter-spacing:0.17px;color:#DFE1E5">Options to pass to the java compiler</div>
<svg style="left:545px;top:974px" width="40" height="36"><path d="M6.5 6 H14.5 L18.5 10 H30.5 Q32.5 10 32.5 12 V26.5 Q32.5 28.5 30.5 28.5 H6.5 Q4.5 28.5 4.5 26.5 V8 Q4.5 6 6.5 6 Z" fill="#43454A" stroke="#CED0D6" stroke-width="2.1" stroke-linejoin="round"/><rect x="19.5" y="18.5" width="15" height="15" rx="4" fill="#2B2D30"/><rect x="21.5" y="20.5" width="11.5" height="11.5" rx="3" fill="#25324D" stroke="#548AF7" stroke-width="2.2"/></svg>
<div class="t" style="left:589.5px;top:977.7px;font-size:27.5px;letter-spacing:0.05px;color:#DFE1E5">mill-build_</div>
<svg style="left:1616px;top:964.5px" width="34" height="34"><path d="M4 30 V23.5 L20.5 7 Q22 5.5 23.5 7 L27 10.5 Q28.5 12 27 13.5 L10.5 30 Z M17.5 10 L24 16.5" fill="none" stroke="#CED0D6" stroke-width="2.2" stroke-linejoin="round"/></svg>
<div class="a" style="left:1680.5px;top:970.8px;width:4.5px;height:4.5px;border-radius:50%;background:#CED0D6"></div>
<div class="a" style="left:1680.5px;top:980.8px;width:4.5px;height:4.5px;border-radius:50%;background:#CED0D6"></div>
<div class="a" style="left:1680.5px;top:990.8px;width:4.5px;height:4.5px;border-radius:50%;background:#CED0D6"></div>
<div class="a" style="left:0;top:1048px;width:1952px;height:2px;background:#2B2D30"></div>
<div class="a" style="left:0;top:1050px;width:1952px;height:50px;background:#1E1F22"></div>
<div class="t" style="left:135.0px;top:1059.2px;font-size:27.5px;letter-spacing:0.25px;color:#A9ACB1">`package`</div>
<div class="t" style="left:310.0px;top:1059.2px;font-size:27.5px;letter-spacing:0.70px;color:#A9ACB1">subprojects</div>
<div class="t" style="left:501.6px;top:1059.2px;font-size:27.5px;letter-spacing:0.71px;color:#A9ACB1">errorprone</div>
<div class="t" style="left:682.5px;top:1059.2px;font-size:27.5px;letter-spacing:0.09px;color:#A9ACB1">javacOptions()</div>
<svg style="left:285px;top:1066px" width="9" height="16"><polyline points="1.5,1 7,7.5 1.5,14" fill="none" stroke="#6A6E75" stroke-width="1.6"/></svg>
<svg style="left:478px;top:1066px" width="9" height="16"><polyline points="1.5,1 7,7.5 1.5,14" fill="none" stroke="#6A6E75" stroke-width="1.6"/></svg>
<svg style="left:657px;top:1066px" width="9" height="16"><polyline points="1.5,1 7,7.5 1.5,14" fill="none" stroke="#6A6E75" stroke-width="1.6"/></svg>
<div class="a" style="left:0;top:1098px;width:1952px;height:62px;background:#2B2D30"></div>
<div class="t" style="left:140.0px;top:1110.8px;font-size:27.5px;letter-spacing:0.25px;color:#A9ACB3">Method 'javacOptions' needs override modifier</div>
<svg style="left:974px;top:1108px" width="34" height="34"><path d="M3 2 V32 M30 2 V32" stroke="#548AF7" stroke-width="2.2"/><path d="M9 11 H23 M18.5 6.5 L23 11 L18.5 15.5 M25 23 H11 M15.5 18.5 L11 23 L15.5 27.5" fill="none" stroke="#CED0D6" stroke-width="2"/></svg>
<div class="t" style="left:1036.0px;top:1110.8px;font-size:27.5px;letter-spacing:-0.14px;color:#A9ACB3">127:23 (12 chars)</div>
<div class="t" style="left:1280.6px;top:1110.8px;font-size:27.5px;letter-spacing:-1.00px;color:#A9ACB3">LF</div>
<div class="t" style="left:1342.6px;top:1110.8px;font-size:27.5px;letter-spacing:0.73px;color:#A9ACB3">UTF-8</div>
<svg style="left:1456px;top:1112px" width="32" height="28"><rect x="2" y="2" width="28" height="23.5" rx="3" fill="#253627"/><path d="M7.5 2.5 H4 Q2.5 2.5 2.5 4 V23.5 Q2.5 25 4 25 H7.5 M24.5 2.5 H28 Q29.5 2.5 29.5 4 V23.5 Q29.5 25 28 25 H24.5" fill="none" stroke="#5E9E63" stroke-width="2"/><path d="M10 7 H22 M16 7 V21" stroke="#DFE1E5" stroke-width="2"/></svg>
<div class="t" style="left:1520.0px;top:1110.8px;font-size:27.5px;letter-spacing:0.20px;color:#A9ACB3">4 spaces*</div>
<svg style="left:1646px;top:1108px" width="36" height="38"><path d="M12 32 H7 Q4.5 32 4.5 29.5 V10 L11 4 H21.5 Q24 4 24 6.5 V17" fill="none" stroke="#CED0D6" stroke-width="2.2" stroke-linejoin="round"/><path d="M4.5 11 H11 V4" fill="none" stroke="#CED0D6" stroke-width="2.2" stroke-linejoin="round"/><polygon points="22.50,17.90 23.49,17.97 24.21,19.12 24.64,20.33 25.30,20.65 25.91,21.06 27.17,20.83 28.53,20.87 29.08,21.70 29.52,22.59 28.88,23.79 28.05,24.77 28.10,25.50 28.05,26.23 28.88,27.21 29.52,28.41 29.08,29.30 28.53,30.13 27.17,30.17 25.91,29.94 25.30,30.35 24.64,30.67 24.21,31.88 23.49,33.03 22.50,33.10 21.51,33.03 20.79,31.88 20.36,30.67 19.70,30.35 19.09,29.94 17.83,30.17 16.47,30.13 15.92,29.30 15.48,28.41 16.12,27.21 16.95,26.23 16.90,25.50 16.95,24.77 16.12,23.79 15.48,22.59 15.92,21.70 16.47,20.87 17.83,20.83 19.09,21.06 19.70,20.65 20.36,20.33 20.79,19.12 21.51,17.97" fill="#2B2D30" stroke="#CED0D6" stroke-width="2"/><circle cx="22.5" cy="25.5" r="1.6" fill="#CED0D6"/></svg>
<svg style="left:1708px;top:1108px" width="40" height="34"><rect x="6" y="14" width="18.5" height="15.5" rx="2.5" fill="none" stroke="#CED0D6" stroke-width="2.2"/><path d="M15.2 19 V24" stroke="#CED0D6" stroke-width="2.2"/><path d="M21 14 V12 Q21 6.5 26.5 6.5 Q32 6.5 32 12 V15.5" fill="none" stroke="#CED0D6" stroke-width="2.2" stroke-linecap="round"/></svg>
<svg style="left:1770px;top:1106px" width="36" height="38"><path d="M5.5 28 H31 Q31.5 27.5 31 27 L27.5 22 V16 Q27.5 6.5 18.25 6.5 Q9 6.5 9 16 V22 L5.5 27 Q5 27.5 5.5 28 Z" fill="none" stroke="#CED0D6" stroke-width="2.2" stroke-linejoin="round"/><path d="M15 33.5 Q18.25 36 21.5 33.5" fill="none" stroke="#CED0D6" stroke-width="2.2" stroke-linecap="round"/></svg>
</div>
<div id="frame"></div>
</body></html>
